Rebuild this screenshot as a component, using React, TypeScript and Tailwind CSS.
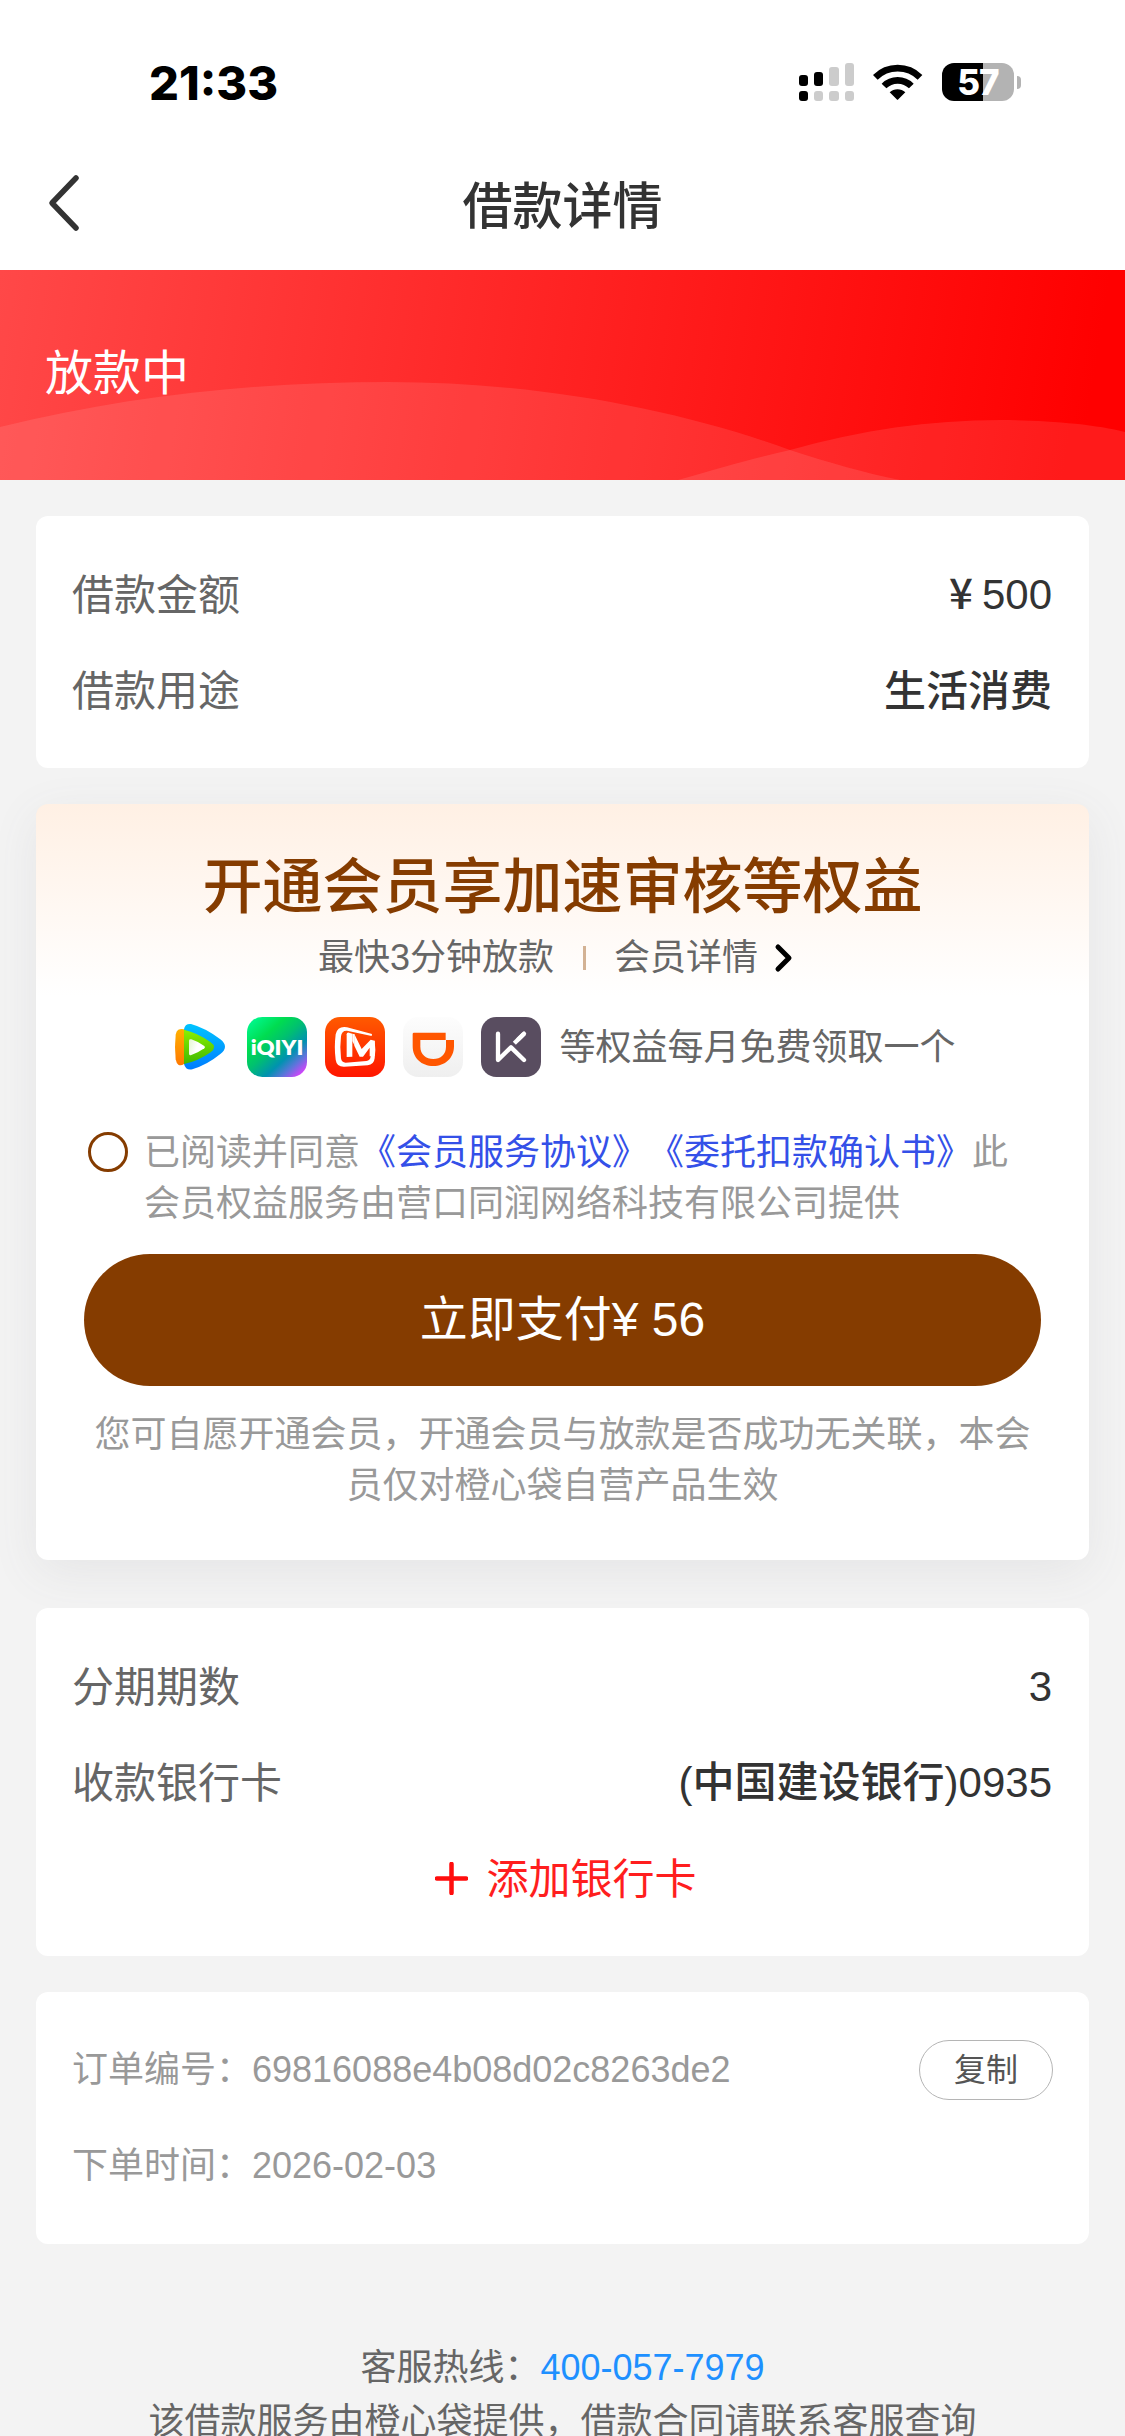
import React from "react";

const CellularIcon = () => (
  <svg className="h-[38px] w-[55px]" viewBox="0 0 55 38">
    <rect x="0" y="12" width="9" height="11" rx="3" fill="#000" />
    <rect x="15" y="9" width="9" height="14" rx="3" fill="#000" />
    <rect x="30" y="4" width="10" height="19" rx="3" fill="#ccc" />
    <rect x="46" y="0" width="9" height="23" rx="3" fill="#ccc" />
    <rect x="0" y="28" width="9" height="10" rx="3" fill="#000" />
    <rect x="15" y="28" width="9" height="10" rx="3" fill="#ccc" />
    <rect x="30" y="28" width="10" height="10" rx="3" fill="#ccc" />
    <rect x="46" y="28" width="9" height="10" rx="3" fill="#ccc" />
  </svg>
);

const WifiIcon = () => (
  <svg className="h-[38px] w-[50px]" viewBox="340 69 150 114">
    <path d="M347 112 A95 95 0 0 1 481 112" fill="none" stroke="#000" strokeWidth="20" />
    <path d="M373 138 A58 58 0 0 1 455 138" fill="none" stroke="#000" strokeWidth="20" />
    <path d="M390 157 A34 34 0 0 1 437 157 L416 178 Q413.500 181 411 178Z" fill="#000" />
  </svg>
);

const Battery = () => (
  <div className="flex items-center gap-[3px]">
    <div className="flex h-[38px] w-[72px] items-center justify-center rounded-[12px] bg-[linear-gradient(90deg,#000_41px,#b3b3b3_41px)]">
      <span className="font-['Inter'] text-[35px] leading-[38px] font-extrabold tracking-[-1px] text-white">57</span>
    </div>
    <div className="h-[13px] w-[4px] rounded-r-[4px] bg-[#b3b3b3]" />
  </div>
);

const TencentVideo = () => (
  <svg className="size-[60px]" viewBox="30 51 180 180">
    <defs>
      <linearGradient id="tvBlue" x1="0" y1="0" x2="0" y2="1">
        <stop offset="0" stopColor="#00c4ff" />
        <stop offset="1" stopColor="#007cff" />
      </linearGradient>
      <linearGradient id="tvOrange" x1="0" y1="0" x2="0" y2="1">
        <stop offset="0" stopColor="#ffb100" />
        <stop offset="1" stopColor="#ff7800" />
      </linearGradient>
      <linearGradient id="tvGreen" x1="0" y1="0" x2="0" y2="1">
        <stop offset="0" stopColor="#8cf000" />
        <stop offset="1" stopColor="#3fb800" />
      </linearGradient>
      <linearGradient id="tvPlay" x1="0" y1="0" x2="1" y2="0.3">
        <stop offset="0" stopColor="#e4f7d0" />
        <stop offset="0.6" stopColor="#fff" />
      </linearGradient>
    </defs>
    <path d="M75 88 Q78 70 96 72 Q140 84 184 118 Q212 140 184 162 Q145 194 100 208 Q80 212 75 192Z" fill="url(#tvBlue)" />
    <path d="M75 88 Q66 85 58 89 Q52 92 50 104 Q46 140 50 178 Q52 190 58 194 Q66 198 75 192Z" fill="url(#tvOrange)" />
    <path d="M75 89 Q115 98 154 126 Q176 141 155 157 Q117 184 75 192Z" fill="url(#tvGreen)" />
    <path d="M90 121 Q91 116 97 118 Q118 125 136 138 Q140 141.500 136 145 Q118 158 97 165 Q91 167 90 162Z" fill="url(#tvPlay)" />
  </svg>
);

const Iqiyi = () => (
  <svg className="size-[60px]" viewBox="264 51 180 180">
    <defs>
      <linearGradient id="iqBase" x1="0" y1="0" x2="0.9" y2="1">
        <stop offset="0" stopColor="#00ff9c" />
        <stop offset="0.32" stopColor="#00dc50" />
        <stop offset="0.5" stopColor="#00c070" />
        <stop offset="0.7" stopColor="#0092b0" />
        <stop offset="0.84" stopColor="#5f74dc" />
        <stop offset="0.97" stopColor="#d144fa" />
      </linearGradient>
    </defs>
    <rect x="264" y="51" width="180" height="180" rx="46" fill="url(#iqBase)" />
    <text x="275" y="165" fill="#fff" fontFamily="Lato, Inter, sans-serif" fontWeight="800" fontSize="64" textLength="158" lengthAdjust="spacingAndGlyphs">
      iQIYI
    </text>
  </svg>
);

const MangoTv = () => (
  <svg className="size-[60px]" viewBox="0 0 180 180">
    <defs>
      <linearGradient id="mgBase" x1="0" y1="0" x2="0" y2="1">
        <stop offset="0" stopColor="#ff5a00" />
        <stop offset="1" stopColor="#ff1500" />
      </linearGradient>
    </defs>
    <rect width="180" height="180" rx="46" fill="url(#mgBase)" />
    <path
      d="M141 51 L66 31 Q38 26 32 52 Q27 92 32 128 Q35 150 58 149 L128 145 Q147 143 149 124 Q153 98 149 71 L137 76 V118 Q136 131 124 132 L62 137 Q50 137 48 124 Q44 90 48 58 Q50 40 66 41 L140 57Z"
      fill="#fff"
    />
    <path d="M65 52 Q65 46 72 47 L82 50 V119 L65 120Z" fill="#fff" />
    <path d="M88 51 L110 96 L137 68 L149 71 V117 L134 118 V92 L114 119 H104 L88 86Z" fill="#fff" />
    <path d="M82 50 L89 52 V86 L82 72Z" fill="#fff" />
  </svg>
);

const Didi = () => (
  <svg className="size-[60px]" viewBox="732 51 180 180">
    <defs>
      <linearGradient id="ddBase" x1="0" y1="0" x2="0" y2="1">
        <stop offset="0" stopColor="#fdfdfd" />
        <stop offset="1" stopColor="#efefef" />
      </linearGradient>
    </defs>
    <rect x="732" y="51" width="180" height="180" rx="46" fill="url(#ddBase)" />
    <path d="M765 98 H860 V120 H885 V138 C885 175 858 198 823 198 C788 198 761 175 761 138 V102 Q761 98 765 98Z M784 120 V140 C784 163 801 177 823 177 C845 177 861 163 861 140 V120Z" fill="#ff5600" fillRule="evenodd" />
  </svg>
);

const Keep = () => (
  <svg className="size-[60px]" viewBox="966 51 180 180">
    <rect x="966" y="51" width="180" height="180" rx="46" fill="#594d60" />
    <g fill="none" stroke="#fff" strokeWidth="13" strokeLinecap="round" strokeLinejoin="round">
      <path d="M1017 101 V180 L1056 142 L1095 180" />
      <path d="M1095 101 L1066 130" strokeLinecap="butt" />
      <path d="M1095 101 L1078 118" />
    </g>
  </svg>
);

const BannerWaves = () => (
  <svg className="absolute inset-0 h-full w-full" viewBox="0 0 1125 210" preserveAspectRatio="none">
    <path d="M0 157 C130 125 260 112 388 112 C540 112 680 140 790 180 C830 193 865 203 900 210 H0Z" fill="#fff" fillOpacity="0.1" />
    <path d="M678 210 C720 198 755 188 790 180 C860 160 930 150 1000 150 C1045 150 1095 154 1125 162 V210Z" fill="#fff" fillOpacity="0.1" />
  </svg>
);

const Row = ({ label, children }: { label: string; children: React.ReactNode }) => (
  <div className="flex h-[96px] items-center justify-between text-[42px]">
    <span className="pt-[2px] text-[#666]">{label}</span>
    <span className="font-medium text-[#333]">{children}</span>
  </div>
);

const Latin = ({ children }: { children: React.ReactNode }) => <span className="font-normal">{children}</span>;

export default function App() {
  return (
    <div className="h-[2436px] w-[1125px] overflow-hidden bg-[#f3f3f3] font-['Liberation_Sans','Noto_Sans_CJK_SC',sans-serif] [text-spacing-trim:space-all]">
      <header className="h-[270px] bg-white">
        <div className="flex h-[132px] justify-between pt-[63px] pr-[104px] pl-[149px]">
          <span className="mt-[-4px] font-['Inter'] text-[47px] leading-[47px] font-extrabold">21:33</span>
          <div className="flex items-start">
            <CellularIcon />
            <div className="ml-[19px]">
              <WifiIcon />
            </div>
            <div className="ml-[19px]">
              <Battery />
            </div>
          </div>
        </div>
        <div className="grid h-[138px] grid-cols-[150px_1fr_150px] items-start">
          <svg className="mt-[40px] ml-[45px] h-[62px] w-[36px]" viewBox="0 0 36 62" fill="none" stroke="#333" strokeWidth="5.500" strokeLinecap="round" strokeLinejoin="round">
            <path d="M31 6 L7 31 L31 56" />
          </svg>
          <h1 className="mt-[39px] text-center text-[50px] leading-[72px] font-medium text-[#333]">借款详情</h1>
        </div>
      </header>

      <section className="relative h-[210px] bg-[linear-gradient(99deg,#ff4848_0%,#ff2222_50%,#ff0000_96%)]">
        <BannerWaves />
        <p className="relative pt-[68px] pl-[45px] text-[48px] leading-[72px] text-white">放款中</p>
      </section>

      <main className="px-[36px] pt-[36px]">
        <section className="rounded-[12px] bg-white pr-[37px] pl-[36px] py-[30px]">
          <Row label="借款金额">
            <span className="inline-block w-[42px] text-center font-['Noto_Sans_CJK_SC'] leading-[48px]">¥</span>
            <Latin>500</Latin>
          </Row>
          <Row label="借款用途">
            <span className="relative top-px">生活消费</span>
          </Row>
        </section>

        <section className="mt-[36px] h-[756px] rounded-[12px] bg-white bg-[linear-gradient(180deg,#fff0e4_0px,#ffffff_192px)] px-[48px] pt-[48px] shadow-[0_12px_48px_0_rgba(100,101,115,0.09)]">
          <h2 className="text-center text-[60px] leading-[72px] font-medium text-[#853c00]">开通会员享加速审核等权益</h2>
          <div className="mt-[7px] flex h-[54px] items-center justify-center pr-[13px] text-[36px] leading-[54px] text-[#666]">
            <span>最快3分钟放款</span>
            <span className="mr-[28px] ml-[29px] h-[24px] w-[3px] bg-[#d3b294]" />
            <span>会员详情</span>
            <svg className="ml-[16px] h-[30px] w-[20px]" viewBox="0 0 20 30" fill="none" stroke="#000" strokeWidth="5" strokeLinecap="round" strokeLinejoin="round">
              <path d="M4 4 L15 15 L4 26" />
            </svg>
          </div>
          <div className="mt-[32px] flex h-[60px] items-center justify-center gap-[18px]">
            <TencentVideo />
            <Iqiyi />
            <MangoTv />
            <Didi />
            <Keep />
            <span className="pt-[2px] text-[36px] leading-[54px] text-[#666]">等权益每月免费领取一个</span>
          </div>
          <div className="mt-[50px] flex items-start pl-[4px]">
            <span className="mt-[5px] size-[40px] shrink-0 rounded-full border-[3px] border-[#853c00]" />
            <p className="ml-[16px] w-[876px] text-[36px] leading-[51px] text-[#999]">
              已阅读并同意<span className="text-[#3450e8]">《会员服务协议》《委托扣款确认书》</span>此会员权益服务由营口同润网络科技有限公司提供
            </p>
          </div>
          <button className="mt-[25px] flex h-[132px] w-[957px] items-center justify-center rounded-full bg-[#853c00] text-[48px] text-white">
            立即支付¥ 56
          </button>
          <p className="mt-[23px] text-center text-[36px] leading-[51px] text-[#999]">
            您可自愿开通会员，开通会员与放款是否成功无关联，本会
            <br />
            员仅对橙心袋自营产品生效
          </p>
        </section>

        <section className="relative mt-[48px] rounded-[12px] bg-white pr-[37px] pl-[36px] py-[30px]">
          <Row label="分期期数">
            <Latin>3</Latin>
          </Row>
          <Row label="收款银行卡">
            <Latin>(</Latin>中国建设银行<Latin>)0935</Latin>
          </Row>
          <div className="flex h-[96px] items-center justify-center pl-[8px] text-[42px] text-[#ff1e1e]">
            <svg className="mr-[18px] size-[33px]" viewBox="0 0 33 33" stroke="#ff0d0d" strokeWidth="4.500" strokeLinecap="round">
              <path d="M16.500 2 V31 M2 16.500 H31" />
            </svg>
            <span className="pt-[2px]">添加银行卡</span>
          </div>
        </section>

        <section className="mt-[36px] rounded-[12px] bg-white px-[36px] py-[30px] text-[36px] text-[#999]">
          <div className="flex h-[96px] items-center justify-between">
            <span>订单编号：69816088e4b08d02c8263de2</span>
            <button className="flex h-[60px] w-[134px] items-center justify-center rounded-full border border-[#b5b5b5] text-[32px] text-[#555]">
              复制
            </button>
          </div>
          <div className="flex h-[96px] items-center">下单时间：2026-02-03</div>
        </section>
      </main>

      <footer className="pt-[97px] text-center text-[36px] leading-[54px] text-[#666]">
        <p>
          客服热线：<span className="text-[#1e90ff]">400-057-7979</span>
        </p>
        <p>该借款服务由橙心袋提供，借款合同请联系客服查询</p>
      </footer>
    </div>
  );
}
